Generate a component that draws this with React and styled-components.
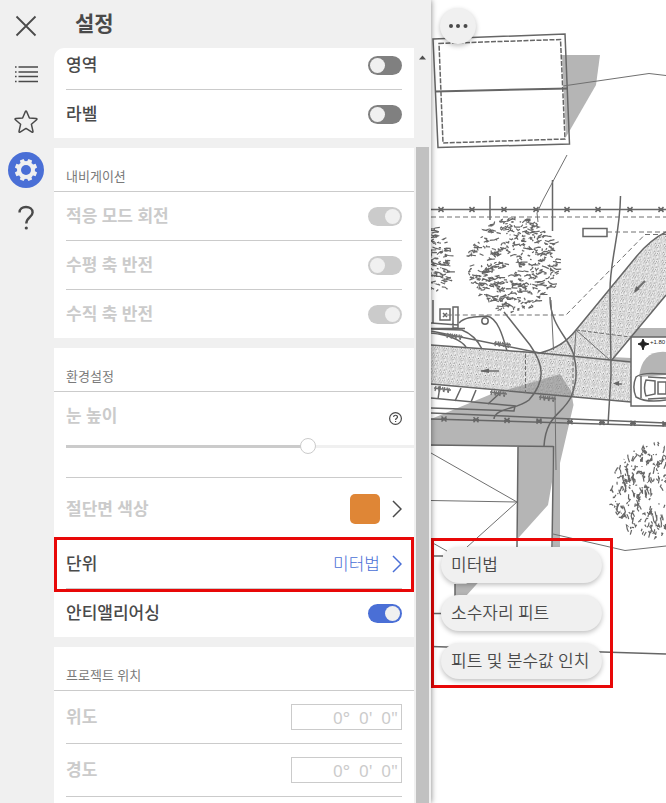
import React from "react";
import styled, { createGlobalStyle } from "styled-components";

const GlobalStyle = createGlobalStyle`
  * { box-sizing: border-box; }
  body {
    margin: 0;
    background: #fff;
    color: #4a4a4a;
    font-family: "Noto Sans", "Noto Sans CJK KR", sans-serif;
  }
  button, input { font: inherit; color: inherit; }
`;

const Screen = styled.div`
  display: flex;
  height: 100vh;
  overflow: hidden;
`;

const SidePanel = styled.aside`
  position: relative;
  z-index: 1;
  display: flex;
  flex: none;
  background: #f0f0f0;
  box-shadow: 0 0 6px rgba(0, 0, 0, 0.5);
`;

const Rail = styled.nav`
  display: flex;
  flex-direction: column;
  align-items: center;
  gap: 12px;
  width: 54px;
  padding: 8px 2px 0 0;
`;

const RailButton = styled.button`
  display: grid;
  place-items: center;
  width: 36px;
  height: 36px;
  padding: 0;
  border: 0;
  border-radius: 50%;
  background: ${(p) => (p.$active ? "#4a6fd6" : "transparent")};
  color: ${(p) => (p.$active ? "#f0f0f0" : "#4a4a4a")};
`;

const Settings = styled.div`
  display: flex;
  flex-direction: column;
  min-height: 0;
`;

const Title = styled.h1`
  margin: 0;
  height: 48px;
  padding-left: 21px;
  font-size: 21px;
  font-weight: 700;
  line-height: 46px;
`;

const ScrollArea = styled.div`
  display: flex;
  gap: 2px;
  flex: 1;
  min-height: 0;
  padding-right: 2px;
`;

const Viewport = styled.div`
  width: 360px;
  overflow: hidden;
  border-top-left-radius: 10px;
`;

const CardList = styled.div`
  display: flex;
  flex-direction: column;
  gap: 10px;
  margin-top: -7px;
`;

const Card = styled.section`
  background: #fff;
`;

const CardTitle = styled.h2`
  margin: 0;
  height: 44px;
  padding: 18px 12px 0;
  border-bottom: 1px solid #cbcbcb;
  color: #7a7a7a;
  font-size: 13px;
  font-weight: 400;
  line-height: 20px;
`;

const Row = styled.div`
  position: relative;
  display: flex;
  align-items: center;
  justify-content: space-between;
  height: ${(p) => p.$height || 49}px;
  margin: 0 12px;
  border-bottom: 1px solid #cbcbcb;
  &:last-child { border-bottom: 0; height: ${(p) => p.$height || 48}px; }
`;

const Label = styled.label`
  color: ${(p) => (p.$muted ? "#cbcbcb" : "#4a4a4a")};
  font-size: 17px;
  font-weight: ${(p) => (p.$muted ? 700 : 500)};
  line-height: 24px;
`;

const Toggle = styled.input`
  appearance: none;
  flex: none;
  width: 34px;
  height: 19px;
  margin: 0;
  padding: 2px;
  border-radius: 10px;
  background: #808080;
  &::before {
    content: "";
    display: block;
    width: 15px;
    height: 15px;
    border-radius: 50%;
    background: #f0f0f0;
  }
  &:checked { background: #4a6fd6; }
  &:checked::before { margin-left: auto; }
  &:disabled { background: #cbcbcb; }
`;

const SliderBlock = styled.div`
  height: 86px;
  margin: 0 12px;
  padding-top: 12px;
  border-bottom: 1px solid #cbcbcb;
`;

const SliderHead = styled.div`
  display: flex;
  align-items: center;
  justify-content: space-between;
`;

const HelpButton = styled.button`
  display: grid;
  padding: 4px 0 0;
  border: 0;
  background: none;
`;

const Slider = styled.input`
  appearance: none;
  display: block;
  width: calc(100% + 12px);
  height: 16px;
  margin: 10px 0 0;
  background: linear-gradient(90deg, #cbcbcb 70%, #f0f0f0 70%) center / 100% 3px no-repeat;
  &::-webkit-slider-thumb {
    appearance: none;
    width: 16px;
    height: 16px;
    border: 1px solid #cbcbcb;
    border-radius: 50%;
    background: #fff;
  }
`;

const ValueButton = styled.button`
  display: flex;
  align-items: center;
  gap: 12px;
  padding: 0;
  border: 0;
  background: none;
  color: ${(p) => (p.$accent ? "#4a6fd6" : "#4a4a4a")};
  font-size: 17px;
  font-weight: 300;
  line-height: 24px;
`;

const Swatch = styled.span`
  width: 30px;
  height: 30px;
  border-radius: 5px;
  background: #df8636;
`;

const AngleInput = styled.input`
  width: 111px;
  height: 26px;
  padding: 0 3px;
  border: 1px solid #cbcbcb;
  border-radius: 0;
  background: #fff;
  color: #cbcbcb;
  font-family: "Noto Sans", sans-serif;
  font-size: 17px;
  text-align: right;
  white-space: pre;
`;

const RowHighlight = styled.span`
  position: absolute;
  inset: -3px -12px -4px -12px;
  border: 3px solid #e80808;
  pointer-events: none;
`;

const ScrollTrack = styled.div`
  display: flex;
  flex-direction: column;
  align-items: center;
  width: 13px;
  padding-top: 7px;
`;

const ScrollThumb = styled.div`
  flex: 1;
  width: 100%;
  margin-top: 87px;
  background: #c1c1c1;
`;

const MapArea = styled.main`
  position: relative;
  flex: 1;
  min-width: 0;
  overflow: hidden;
`;

const Drawing = styled.svg`
  position: absolute;
  inset: 0;
  width: 100%;
  height: 100%;
`;

const MoreButton = styled.button`
  position: absolute;
  top: 8px;
  left: 9px;
  display: grid;
  place-items: center;
  width: 36px;
  height: 36px;
  padding: 0;
  border: 0;
  border-radius: 50%;
  background: #f0f0f0;
  box-shadow: 0 2px 5px rgba(0, 0, 0, 0.25);
`;

const UnitMenu = styled.div`
  position: absolute;
  top: 538px;
  left: 0;
  display: flex;
  flex-direction: column;
  gap: 12px;
  width: 182px;
  padding: 6px 8px 6px 7px;
  border: 3px solid #e80808;
`;

const UnitOption = styled.button`
  height: 36px;
  padding: 0 10px;
  border: 0;
  border-radius: 18px;
  background: #f0f0f0;
  box-shadow: 0 2px 5px rgba(0, 0, 0, 0.25);
  font-size: 17px;
  font-weight: 350;
  line-height: 36px;
  text-align: left;
  white-space: nowrap;
`;

const CloseIcon = () => (
  <svg width="22" height="22" viewBox="0 0 22 22" fill="none" stroke="currentColor" strokeWidth="1.8">
    <path d="M1.500 1.500 20.500 20.500M20.500 1.500 1.500 20.500" />
  </svg>
);

const ListIcon = () => (
  <svg width="24" height="20" viewBox="0 0 24 20" stroke="currentColor" strokeWidth="1.6">
    <path d="M1 3h1.600M4.500 3H24M1 8h1.600M4.500 8H24M1 12.500h1.600M4.500 12.500H24M1 17.500h1.600M4.500 17.500H24" />
  </svg>
);

const StarIcon = () => (
  <svg width="24" height="24" viewBox="0 0 24 24" fill="none" stroke="currentColor" strokeWidth="1.500" strokeLinejoin="round">
    <path d="M11.300 1.700Q12 .5 12.700 1.700L15.400 8 22.300 8.600Q23.600 8.900 22.600 9.800L17.400 14.300 19 21.300Q19.100 22.600 17.900 22.100L12 18.400 6.100 22.100Q4.900 22.600 5 21.300L6.600 14.300 1.400 9.800Q.4 8.900 1.700 8.600L8.600 8Z" />
  </svg>
);

const GearIcon = () => (
  <svg width="24" height="24" viewBox="0 0 24 24">
    <g fill="currentColor">
      <circle cx="12" cy="12" r="9" />
      {[0, 45, 90, 135, 180, 225, 270, 315].map((a) => (
        <path key={a} d="M9.600 4 10 .8H14L14.400 4Z" transform={`rotate(${a + 22.5} 12 12)`} />
      ))}
    </g>
    <circle cx="12" cy="12" r="5" fill="#4a6fd6" />
  </svg>
);

const QuestionIcon = () => (
  <svg width="20" height="26" viewBox="0 0 20 26" fill="none" stroke="currentColor" strokeWidth="2.400">
    <path d="M3.500 7.500C3.500 4 6.300 2 10 2S16.600 4.200 16.600 7.400C16.600 12 10.300 12.300 10.300 18.500" />
    <circle cx="10.300" cy="23" r="1.600" fill="currentColor" stroke="none" />
  </svg>
);

const HelpIcon = () => (
  <svg width="13" height="13" viewBox="0 0 13 13" fill="none" stroke="#4a4a4a" strokeWidth="1.200">
    <circle cx="6.500" cy="6.500" r="5.900" />
    <path d="M4.600 5C4.600 2.700 8.500 2.700 8.500 4.900 8.500 6.300 6.600 6.300 6.600 8M6.600 8.900v1.200" />
  </svg>
);

const Chevron = () => (
  <svg width="10" height="18" viewBox="0 0 10 18" fill="none" stroke="currentColor" strokeWidth="1.500">
    <path d="M1 1 9 9 1 17" />
  </svg>
);

const DotsIcon = () => (
  <svg width="20" height="6" viewBox="0 0 20 6" fill="#4a4a4a">
    <circle cx="3" cy="3" r="2" />
    <circle cx="10" cy="3" r="2" />
    <circle cx="17.500" cy="3" r="2" />
  </svg>
);

function foliage(cx, cy, rx, ry, count, seed, steep) {
  let s = seed;
  const rnd = () => {
    s = (s * 16807) % 2147483647;
    return s / 2147483647;
  };
  let d = "";
  for (let i = 0; i < count; i += 1) {
    const a = rnd() * Math.PI * 2;
    const r = Math.sqrt(0.02 + rnd() * 0.98);
    let x = cx + Math.cos(a) * r * rx;
    let y = cy + Math.sin(a) * r * ry;
    d += `M${x.toFixed(1)} ${y.toFixed(1)}`;
    const steps = 1 + Math.floor(rnd() * 3);
    for (let k = 0; k < steps; k += 1) {
      const u = (rnd() - 0.35) * 8;
      const v = (rnd() - 0.5) * 4;
      x += steep ? v : u;
      y += steep ? u : v;
      d += `L${x.toFixed(1)} ${y.toFixed(1)}`;
    }
  }
  return d;
}

const TREES = [
  foliage(512, 265, 45, 47, 430, 77, false),
  foliage(423, 262, 27, 37, 210, 991, false),
  foliage(658, 491, 48, 47, 380, 4321, true),
];

const cross = (x, y) => `M${x - 2.5} ${y - 2.5}l5 5m0-5l-5 5M${x - 3} ${y}h6`;
const UPPER_FENCE = [441, 472, 504, 536, 567, 598, 630, 661].map((x) => cross(x, 209.5)).join("");
const LOWER_FENCE = [444, 476, 507, 539, 570, 602, 633, 665].map((x, i) => cross(x, 419 + i * 0.7)).join("");
const tufts = (x, y) =>
  Array.from({ length: 7 }, (_, i) => `M${x + i * 2.2} ${y + i * 0.3}l${i % 2 ? 1 : -1} 5`).join("") + `M${x - 2} ${y + 2}l17 2`;

const SitePlan = () => (
  <Drawing viewBox="431 0 235 803" preserveAspectRatio="xMinYMin slice" role="img" aria-label="배치도">
    <defs>
      <pattern id="gravel" width="9" height="8" patternUnits="userSpaceOnUse" patternTransform="rotate(7)">
        <rect width="9" height="8" fill="#ededed" />
        <path
          d="M0 1h1.200M2.500 .5l.8.8M5 1.500h1M7.500 .7l.7.9M1.300 3l.8.6M3.700 3h1M6.200 3.400l.9-.5M8 3.700h.8M.4 5h1M2.800 5.400l.7-.7M5 5h1.200M7.200 5.700l.8-.6M1.500 7h.9M4 7.200l.8-.5M6.300 7h1"
          stroke="#6c6c6c"
          strokeWidth=".9"
        />
      </pattern>
    </defs>
    <g fill="#b5b5b5">
      <path d="M562 55H600L596 85 566 137Z" />
      <path d="M431 419 506 388 560 374 571 391 573.500 405 560 463V560H553V446H431Z" />
      <path d="M518 446H553L552 482 548 505 466 596H455V584L518 545Z" />
      <path d="M635 328H666V338H631Z" />
      <path d="M611 357 631 358V362L611 361Z" />
    </g>
    <path d="M431 447H518V547L466 584H431Z" fill="#fff" />
    <g fill="url(#gravel)">
      <path d="M431 345 540 353 631 362V402L431 384Z" />
      <path d="M540 353Q563 347 576 330L636 257Q650 240 666 232V295L611 361Z" />
    </g>
    <path d="M506 390 560 374 571 391 573 397 523 393Z" fill="#888" fillOpacity=".6" />
    <path d="M631 337H668V406H631Z" fill="#fff" stroke="#666" strokeWidth="1.500" />
    <path d="M639 377Q642 350 666 352V375Z" fill="#b5b5b5" />

    <g fill="none" stroke="#666" strokeWidth="1.500">
      <path d="M433 39 565 34 569.500 144 438 147.500Z" />
      <path d="M435 91.500 568 88.500" strokeWidth="2" />
      <path d="M439 43.500 560.500 39.500 565 139 443 143Z" strokeDasharray="5 1.500" />
      <path d="M490 196V220M552.500 180V231M431 209.500H666" />
      <path d="M620.500 196C620 235 610 260 610 290S611 350 611 375L608 425" />
      <path d="M583 228.500H607V236.500H583Z" />
      <path d="M431 345 540 353 631 362M431 384 631 402" />
      <path d="M540 353Q563 347 576 330L636 257Q650 240 666 232M666 295 611 361" />
      <path d="M504 312 530 345C545 366 545 382 529 400C518 409 495 408 494 419" />
      <path d="M550 297C550 327 570 338 574 356S576 384 571 397C562 415 546 415 544 446" />
      <path d="M440 309H450V320H440ZM453 307H458V328H453ZM433 300V323M431 323 458 325M431 328.500H465" />
      <path d="M459 323C466 316 478 317 487 316C498 318 503 337 507 351" />
      <circle cx="485" cy="321" r="3.200" />
      <path d="M431 331 540 353M431 333Q458 336 466 347M431 329 462 330Q475 335 482 349" />
      <path d="M440 386 438 399M461 388 455 401M476 390 471 402M500 393 488 404" />
      <path d="M431 398 515 406 514 411 431 408M431 413 666 423M431 419 666 426" />
      <path d="M431 445 553.500 446.500M518 446 517 547M553.500 446 552 547M455 584V596" />
      <path d="M431 556H443M431 613.500H443M431 646.500 666 654" />
      <path d="M666 374C650 373 641 373 636 377C633 384 633 390 636 397C643 401 654 402 666 400M641 376V398M646 380Q643 388 646 396L655 394V381ZM658 382H666V394H658ZM648 377 666 378M648 399 666 398" />
      <path d={UPPER_FENCE} />
      <path d={LOWER_FENCE} />
      <path d="M443 313 447 317M447 313 443 317" />
    </g>
    <g fill="none" stroke="#707070" strokeWidth="1">
      <path d="M563 86 649 73.500 666 75.500M567 155 543 200 537 213 538 222" />
      <path d="M551 300 553.500 350M576 330 574 359M576 330 611 361M555 396 556 470" />
      <path d="M431 453 517 502 467 547M431 500.500 517 502M431 542 447 551M553 534 625 550.500 666 546" />
      <path d="M431 217H666M607 232H666M666 234.500H645L566 315H446" strokeDasharray="5 3" />
      <path d="M525.500 354V393M573 356V397M576 330 630 337" strokeDasharray="4 2" />
      <path d={tufts(448, 333) + tufts(496, 341) + tufts(436, 386) + tufts(492, 390) + tufts(541, 395)} strokeWidth="1.300" />
      <path d="M481 371H499M616 384H622" strokeWidth="1.500" />
      <path d="M635 291 645 281" strokeWidth="2" />
    </g>
    <path d="M480 371 489 368.500V373ZM613 383.500 619 381V386ZM634 293 636 286 640 289Z" fill="#666" />
    <path d="M643 339 644.500 342.500 649 344 644.500 345.500 643 350 641.500 345.500 638 344 641.500 342.500Z" fill="#222" stroke="#222" />
    <text x="650" y="344" fontSize="6" fontFamily="Liberation Sans, sans-serif" fill="#222">+1.80</text>
    <g fill="none" stroke="#666" strokeWidth="1.200">
      {TREES.map((d, i) => (
        <path key={i} d={d} />
      ))}
    </g>
  </Drawing>
);

function ToggleRow({ id, text, checked, disabled }) {
  return (
    <Row>
      <Label htmlFor={id} $muted={disabled}>{text}</Label>
      <Toggle id={id} type="checkbox" defaultChecked={checked} disabled={disabled} />
    </Row>
  );
}

function AngleRow({ id, text }) {
  return (
    <Row $height={53}>
      <Label htmlFor={id} $muted>{text}</Label>
      <AngleInput id={id} defaultValue={"0°  0'  0\""} disabled />
    </Row>
  );
}

const RAIL_ITEMS = [
  ["닫기", CloseIcon],
  ["목록", ListIcon],
  ["즐겨찾기", StarIcon],
  ["설정", GearIcon],
  ["도움말", QuestionIcon],
];

export default function App() {
  return (
    <>
      <GlobalStyle />
      <Screen lang="ko">
        <SidePanel>
          <Rail>
            {RAIL_ITEMS.map(([name, Icon]) => (
              <RailButton key={name} type="button" aria-label={name} $active={name === "설정"}>
                <Icon />
              </RailButton>
            ))}
          </Rail>
          <Settings>
            <Title>설정</Title>
            <ScrollArea>
              <Viewport>
                <CardList>
                  <Card>
                    <ToggleRow id="zones" text="영역" />
                    <ToggleRow id="labels" text="라벨" />
                  </Card>
                  <Card>
                    <CardTitle>내비게이션</CardTitle>
                    <ToggleRow id="adaptive" text="적응 모드 회전" checked disabled />
                    <ToggleRow id="flip-x" text="수평 축 반전" disabled />
                    <ToggleRow id="flip-y" text="수직 축 반전" checked disabled />
                  </Card>
                  <Card>
                    <CardTitle>환경설정</CardTitle>
                    <SliderBlock>
                      <SliderHead>
                        <Label htmlFor="eye" $muted>눈 높이</Label>
                        <HelpButton type="button" aria-label="눈 높이 도움말"><HelpIcon /></HelpButton>
                      </SliderHead>
                      <Slider id="eye" type="range" min="0" max="200" defaultValue="141" disabled />
                    </SliderBlock>
                    <Row $height={62}>
                      <Label as="span" $muted>절단면 색상</Label>
                      <ValueButton type="button" aria-label="절단면 색상"><Swatch /><Chevron /></ValueButton>
                    </Row>
                    <Row>
                      <Label as="span">단위</Label>
                      <ValueButton type="button" $accent>미터법<Chevron /></ValueButton>
                      <RowHighlight />
                    </Row>
                    <ToggleRow id="antialias" text="안티앨리어싱" checked />
                  </Card>
                  <Card>
                    <CardTitle>프로젝트 위치</CardTitle>
                    <AngleRow id="latitude" text="위도" />
                    <AngleRow id="longitude" text="경도" />
                    <Row />
                  </Card>
                </CardList>
              </Viewport>
              <ScrollTrack aria-hidden="true">
                <svg width="7" height="5" viewBox="0 0 7 5"><path d="M0 4.500 3.500 .5 7 4.500Z" fill="#505050" /></svg>
                <ScrollThumb />
              </ScrollTrack>
            </ScrollArea>
          </Settings>
        </SidePanel>
        <MapArea>
          <SitePlan />
          <MoreButton type="button" aria-label="더 보기"><DotsIcon /></MoreButton>
          <UnitMenu>
            <UnitOption type="button">미터법</UnitOption>
            <UnitOption type="button">소수자리 피트</UnitOption>
            <UnitOption type="button">피트 및 분수값 인치</UnitOption>
          </UnitMenu>
        </MapArea>
      </Screen>
    </>
  );
}
